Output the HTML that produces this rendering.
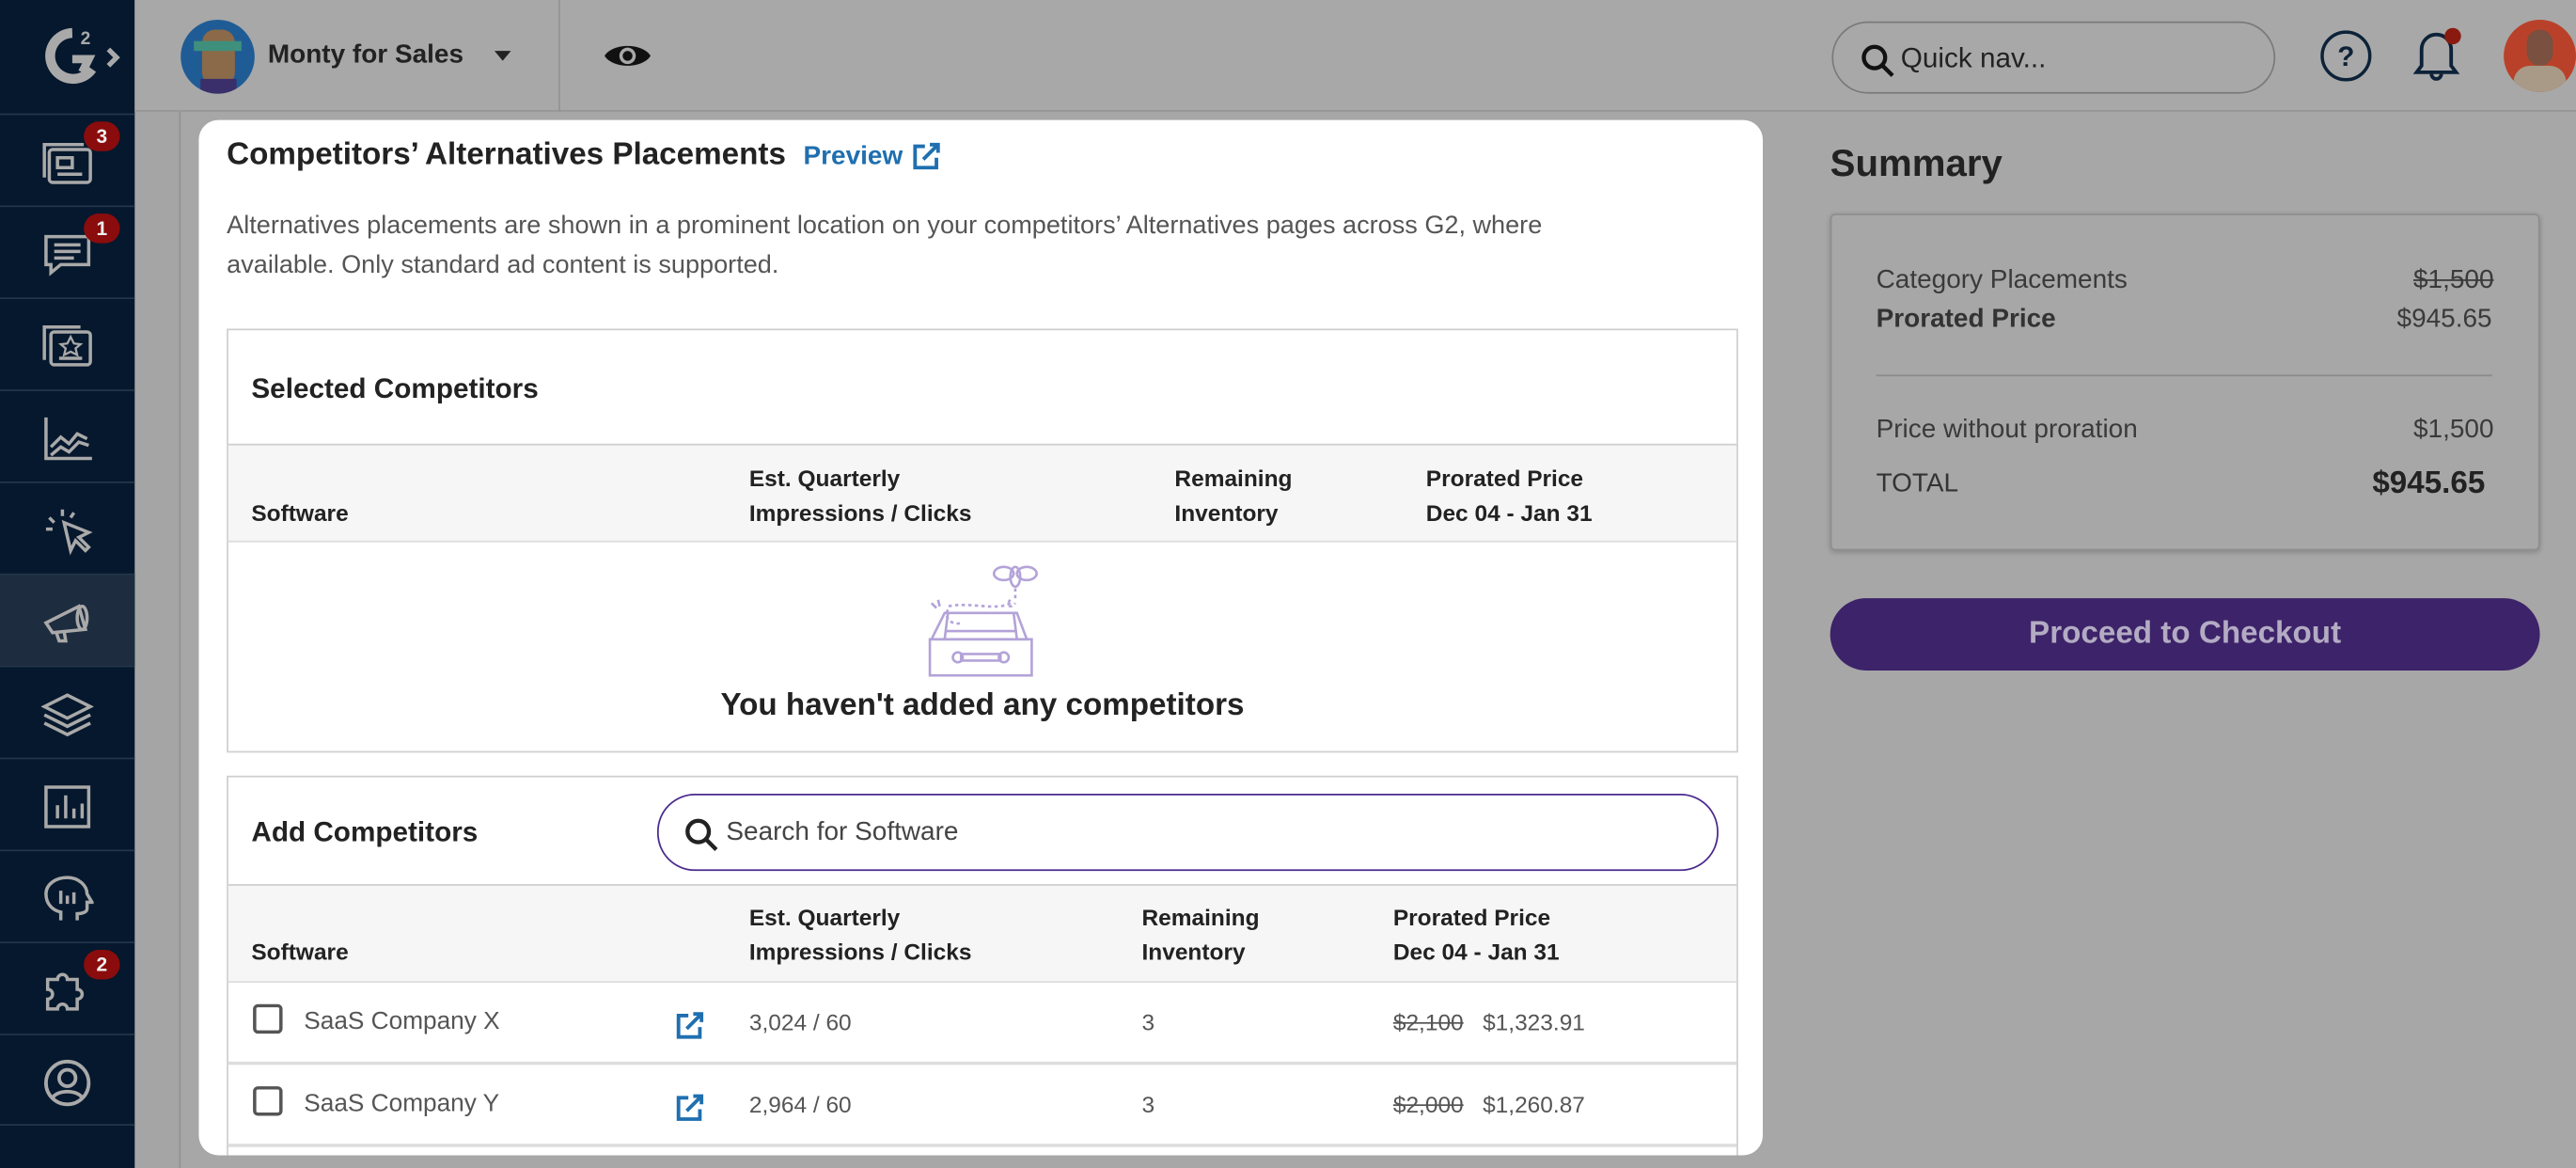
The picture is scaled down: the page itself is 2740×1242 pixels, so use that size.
<!DOCTYPE html>
<html><head><meta charset="utf-8"><style>
*{box-sizing:border-box;margin:0;padding:0}
html,body{width:2740px;height:1242px;overflow:hidden;background:#a7a7a7}
#w{position:absolute;left:0;top:0;width:1568px;height:711px;transform:scale(1.74745);transform-origin:0 0;font-family:"Liberation Sans",sans-serif;color:#222}
.abs{position:absolute}
#side{left:0;top:0;width:82px;height:711px;background:#05182d}
.row{position:absolute;left:0;width:82px;height:56px;border-top:1px solid #23354a}
.row svg{position:absolute;left:25px;top:14px}
.badge{position:absolute;left:51px;width:22px;height:18px;border-radius:9px;background:#8a0c0c;color:#eee;font-size:12px;font-weight:bold;text-align:center;line-height:18px}
#top{left:82px;top:0;width:1486px;height:68px;border-bottom:1px solid #969696;background:#a8a8a8}
#modal{left:121px;top:73px;width:952px;height:630px;background:#fff;border-radius:12px;overflow:hidden}
.box{position:absolute;left:17px;width:920px;border:1px solid #cfcfcf}
.th{position:absolute;font-size:14px;font-weight:bold;color:#222;line-height:21px}
.td{position:absolute;font-size:14px;color:#555}
.s{text-decoration:line-through}
.cb{position:absolute;left:15px;width:18px;height:18px;border:2px solid #555;border-radius:3px}
</style></head><body><div id="w">
<div class="abs" style="left:82px;top:68px;width:28px;height:643px;background:#a5a5a5;border-right:1px solid #939393"></div>
<div id="side" class="abs">
 <svg class="abs" style="left:24px;top:14px" width="52" height="40" viewBox="0 0 52 40"><path d="M20 6a14 14 0 1 0 12 22" fill="none" stroke="#a9a9a9" stroke-width="6"/><path d="M20 22h10l-4 8" fill="none" stroke="#a9a9a9" stroke-width="5"/><text x="25" y="13" font-size="11" fill="#a9a9a9" font-family="Liberation Sans" font-weight="bold">2</text><path d="M42 16l5 5-5 5" fill="none" stroke="#a9a9a9" stroke-width="3"/></svg>
 <div class="row" style="top:69px"><svg width="32" height="30" viewBox="0 0 32 30" fill="none" stroke="#a9a9a9" stroke-width="2"><rect x="5" y="7" width="25" height="20" rx="2"/><path d="M2 24V4h24"/><rect x="10" y="12" width="9" height="6"/><path d="M10 22h15"/></svg><div class="badge" style="top:4px">3</div></div>
 <div class="row" style="top:125px"><svg width="32" height="30" viewBox="0 0 32 30" fill="none" stroke="#a9a9a9" stroke-width="2"><path d="M3 4h26v17H12l-6 5v-5H3z"/><path d="M8 9h16M8 13h16M8 17h12"/></svg><div class="badge" style="top:4px">1</div></div>
 <div class="row" style="top:181px"><svg width="32" height="30" viewBox="0 0 32 30" fill="none" stroke="#a9a9a9" stroke-width="2"><rect x="6" y="6" width="24" height="20" rx="2"/><path d="M2 23V3h22"/><path d="M18 9l2 4 4 .5-3 2.5 1 4-4-2-4 2 1-4-3-2.5 4-.5z" stroke-width="1.3"/><path d="M11 22h14"/></svg></div>
 <div class="row" style="top:237px"><svg width="32" height="30" viewBox="0 0 32 30" fill="none" stroke="#a9a9a9" stroke-width="2"><path d="M3 2v25h28"/><path d="M6 20l6-6 5 4 5-6 6 3M6 25l6-5 5 3 6-6 6 2"/></svg></div>
 <div class="row" style="top:293px"><svg width="32" height="30" viewBox="0 0 32 30" fill="none" stroke="#a9a9a9" stroke-width="2"><path d="M14 10l4 17 3-6 6 6 2-2-6-6 6-3z"/><path d="M13 2v4M5 7l3 3M3 14h4M20 4l-2 3"/></svg></div>
 <div class="row" style="top:349px;background:#1d2c3e"><svg width="32" height="30" viewBox="0 0 32 30" fill="none" stroke="#a9a9a9" stroke-width="2"><path d="M3 15l20-10 4 14-20 2z"/><ellipse cx="25" cy="12" rx="3" ry="7"/><path d="M9 20l2 6h4l-1-6"/></svg></div>
 <div class="row" style="top:405px"><svg width="32" height="30" viewBox="0 0 32 30" fill="none" stroke="#a9a9a9" stroke-width="2"><path d="M16 3l14 7-14 7-14-7z"/><path d="M2 15l14 7 14-7M2 20l14 7 14-7"/></svg></div>
 <div class="row" style="top:461px"><svg width="32" height="30" viewBox="0 0 32 30" fill="none" stroke="#a9a9a9" stroke-width="2"><rect x="3" y="3" width="26" height="24"/><path d="M10 22v-8M15 22V8M20 22v-6M25 22v-9"/></svg></div>
 <div class="row" style="top:517px"><svg width="32" height="30" viewBox="0 0 32 30" fill="none" stroke="#a9a9a9" stroke-width="2"><path d="M12 28v-5c-5-1-9-5-9-11C3 6 9 2 16 2s12 5 12 10l3 5h-3v4c0 2-3 3-6 3v4"/><path d="M12 10v8M16 13v5M20 11v7"/></svg></div>
 <div class="row" style="top:573px"><svg width="32" height="30" viewBox="0 0 32 30" fill="none" stroke="#a9a9a9" stroke-width="2"><path d="M4 8h6a3 3 0 1 1 6 0h6v6a3 3 0 1 1 0 6v6h-6a3 3 0 1 0-6 0H4v-6a3 3 0 1 0 0-6z"/></svg><div class="badge" style="top:4px">2</div></div>
 <div class="row" style="top:629px;border-bottom:1px solid #23354a"><svg width="32" height="30" viewBox="0 0 32 30" fill="none" stroke="#a9a9a9" stroke-width="2.2"><circle cx="16" cy="15" r="13"/><circle cx="16" cy="12" r="5"/><path d="M7 24c3-5 15-5 18 0"/></svg></div>
</div>
<div id="top" class="abs">
 <div class="abs" style="left:28px;top:12px;width:45px;height:45px;border-radius:50%;background:#1f5c96;overflow:hidden"><div class="abs" style="left:13px;top:6px;width:20px;height:34px;background:#8a6a48;border-radius:8px"></div><div class="abs" style="left:8px;top:13px;width:29px;height:6px;background:#3f8f7d"></div><div class="abs" style="left:12px;top:36px;width:22px;height:10px;background:#3a2f6a"></div></div>
 <div class="abs" style="left:81px;top:25px;font-size:16px;font-weight:bold;color:#222">Monty for Sales</div>
 <svg class="abs" style="left:218px;top:30px" width="12" height="8"><path d="M1 1h10L6 7z" fill="#222"/></svg>
 <div class="abs" style="left:258px;top:0;width:1px;height:68px;background:#939393"></div>
 <svg class="abs" style="left:285px;top:24px" width="30" height="20" viewBox="0 0 30 20"><path d="M1 10C6 2 24 2 29 10 24 18 6 18 1 10z" fill="#111"/><circle cx="15" cy="10" r="5" fill="#a8a8a8"/><circle cx="15" cy="10" r="3" fill="#111"/></svg>
 <div class="abs" style="left:1033px;top:13px;width:270px;height:44px;border:1.5px solid #7a7a7a;border-radius:22px"></div>
 <svg class="abs" style="left:1050px;top:26px" width="22" height="22" viewBox="0 0 22 22" fill="none" stroke="#111" stroke-width="2.5"><circle cx="9" cy="9" r="6.5"/><path d="M14 14l6 6"/></svg>
 <div class="abs" style="left:1075px;top:26px;font-size:17px;color:#222">Quick nav...</div>
 <svg class="abs" style="left:1330px;top:18px" width="32" height="32" viewBox="0 0 32 32"><circle cx="16" cy="16" r="14.5" fill="none" stroke="#0d2238" stroke-width="2"/><text x="16" y="22" text-anchor="middle" font-size="17" font-weight="bold" fill="#0d2238" font-family="Liberation Sans">?</text></svg>
 <svg class="abs" style="left:1385px;top:16px" width="34" height="36" viewBox="0 0 34 36" fill="none" stroke="#0d2238" stroke-width="2.2"><path d="M4 28h24l-3-4V14a9 9 0 0 0-18 0v10z"/><path d="M13 29a3 3 0 0 0 6 0"/><circle cx="26" cy="6" r="5" fill="#8a1a10" stroke="none"/></svg>
 <div class="abs" style="left:1442px;top:12px;width:44px;height:44px;border-radius:50%;background:#b9412a;overflow:hidden"><div class="abs" style="left:14px;top:6px;width:16px;height:22px;border-radius:8px;background:#7a5040"></div><div class="abs" style="left:6px;top:28px;width:32px;height:20px;border-radius:10px;background:#a89a86"></div></div>
</div>
<div class="abs" style="left:1114px;top:86px;font-size:23px;font-weight:bold;color:#222">Summary</div>
<div class="abs" style="left:1114px;top:130px;width:432px;height:205px;border:1.5px solid #8e8e8e;border-radius:3px;box-shadow:0 1px 3px rgba(0,0,0,.2)"></div>
<div class="abs" style="left:1142px;top:162px;font-size:16px;color:#3a3a3a">Category Placements</div>
<div class="abs s" style="left:1469px;top:162px;font-size:16px;color:#3a3a3a">$1,500</div>
<div class="abs" style="left:1142px;top:186px;font-size:16px;font-weight:bold;color:#333">Prorated Price</div>
<div class="abs" style="left:1459px;top:186px;font-size:16px;color:#3a3a3a">$945.65</div>
<div class="abs" style="left:1142px;top:228px;width:375px;height:1px;background:#8a8a8a"></div>
<div class="abs" style="left:1142px;top:253px;font-size:16px;color:#3a3a3a">Price without proration</div>
<div class="abs" style="left:1469px;top:253px;font-size:16px;color:#3a3a3a">$1,500</div>
<div class="abs" style="left:1142px;top:286px;font-size:16px;color:#333">TOTAL</div>
<div class="abs" style="left:1444px;top:284px;font-size:19px;font-weight:bold;color:#222">$945.65</div>
<div class="abs" style="left:1114px;top:364px;width:432px;height:44px;border-radius:22px;background:#3d2369;color:#b3abc3;font-size:19px;font-weight:bold;text-align:center;line-height:44px">Proceed to Checkout</div>

<div id="modal" class="abs">
 <div class="abs" style="left:17px;top:11px;font-size:19px;font-weight:bold;color:#222">Competitors’ Alternatives Placements</div>
 <div class="abs" style="left:368px;top:14px;font-size:16px;font-weight:bold;color:#1f6fb0">Preview</div>
 <svg class="abs" style="left:434px;top:13px" width="18" height="18" viewBox="0 0 18 18" fill="none" stroke="#1f6fb0" stroke-width="2.2"><path d="M8 3H2v13h13v-6"/><path d="M7 11l9-9M11 2h5v5"/></svg>
 <div class="abs" style="left:17px;top:53px;width:870px;font-size:15.5px;color:#555;line-height:24px">Alternatives placements are shown in a prominent location on your competitors’ Alternatives pages across G2, where<br>available. Only standard ad content is supported.</div>
 <div class="box" style="top:127px;height:258px">
  <div class="th" style="left:14px;top:25px;font-size:17px">Selected Competitors</div>
  <div class="abs" style="left:0;top:69px;width:918px;height:60px;background:#f6f6f6;border-top:1.5px solid #cfcfcf;border-bottom:1.5px solid #ddd"></div>
  <div class="th" style="left:14px;top:101px">Software</div>
  <div class="th" style="left:317px;top:80px">Est. Quarterly<br>Impressions / Clicks</div>
  <div class="th" style="left:576px;top:80px">Remaining<br>Inventory</div>
  <div class="th" style="left:729px;top:80px">Prorated Price<br>Dec 04 - Jan 31</div>
  <svg class="abs" style="left:424px;top:139px" width="72" height="74" viewBox="0 0 72 74" fill="none" stroke="#b3a3d8" stroke-width="1.5"><ellipse cx="48" cy="9" rx="6" ry="4"/><ellipse cx="62" cy="9" rx="6" ry="4"/><ellipse cx="55" cy="11" rx="3" ry="6"/><path d="M55 18v8M52 25c-3 3 0 6 3 2M52 27c-8 5-25-1-38 2M14 31c-3 5 3 10 8 8" stroke-dasharray="2 2"/><path d="M4 27l3 3M8 25l1 4"/><path d="M12 33h44l6 16H4z"/><path d="M14 33l-2 16M54 33l2 16M12 44h44"/><rect x="3" y="49" width="62" height="22"/><path d="M22 58h24v4H22z"/><circle cx="20" cy="60" r="3"/><circle cx="48" cy="60" r="3"/></svg>
  <div class="abs" style="left:0;top:218px;width:918px;text-align:center;font-size:19px;font-weight:bold;color:#222">You haven't added any competitors</div>
 </div>
 <div class="box" style="top:399px;height:240px">
  <div class="th" style="left:14px;top:23px;font-size:17px">Add Competitors</div>
  <div class="abs" style="left:261px;top:10px;width:646px;height:47px;border:1.5px solid #4b2a8e;border-radius:23px"></div>
  <svg class="abs" style="left:277px;top:24px" width="22" height="22" viewBox="0 0 22 22" fill="none" stroke="#222" stroke-width="2.5"><circle cx="9" cy="9" r="6.5"/><path d="M14 14l6 6"/></svg>
  <div class="abs" style="left:303px;top:25px;font-size:16px;color:#444">Search for Software</div>
  <div class="abs" style="left:0;top:65px;width:918px;height:60px;background:#f6f6f6;border-top:1.5px solid #cfcfcf;border-bottom:1.5px solid #ddd"></div>
  <div class="th" style="left:14px;top:96px">Software</div>
  <div class="th" style="left:317px;top:75px">Est. Quarterly<br>Impressions / Clicks</div>
  <div class="th" style="left:556px;top:75px">Remaining<br>Inventory</div>
  <div class="th" style="left:709px;top:75px">Prorated Price<br>Dec 04 - Jan 31</div>
  <div class="cb" style="top:138px"></div>
  <div class="td" style="left:46px;top:140px;font-size:15px">SaaS Company X</div>
  <svg class="abs" style="left:272px;top:142px" width="18" height="18" viewBox="0 0 18 18" fill="none" stroke="#1f6fb0" stroke-width="2.2"><path d="M8 3H2v13h13v-6"/><path d="M7 11l9-9M11 2h5v5"/></svg>
  <div class="td" style="left:317px;top:141px">3,024 / 60</div>
  <div class="td" style="left:556px;top:141px">3</div>
  <div class="td" style="left:709px;top:141px"><span class="s">$2,100</span>&nbsp;&nbsp;&nbsp;$1,323.91</div>
  <div class="abs" style="left:0;top:173px;width:918px;height:1.5px;background:#ddd"></div>
  <div class="cb" style="top:188px"></div>
  <div class="td" style="left:46px;top:190px;font-size:15px">SaaS Company Y</div>
  <svg class="abs" style="left:272px;top:192px" width="18" height="18" viewBox="0 0 18 18" fill="none" stroke="#1f6fb0" stroke-width="2.2"><path d="M8 3H2v13h13v-6"/><path d="M7 11l9-9M11 2h5v5"/></svg>
  <div class="td" style="left:317px;top:191px">2,964 / 60</div>
  <div class="td" style="left:556px;top:191px">3</div>
  <div class="td" style="left:709px;top:191px"><span class="s">$2,000</span>&nbsp;&nbsp;&nbsp;$1,260.87</div>
  <div class="abs" style="left:0;top:223px;width:918px;height:1.5px;background:#ddd"></div>
 </div>
</div>
</div></body></html>
